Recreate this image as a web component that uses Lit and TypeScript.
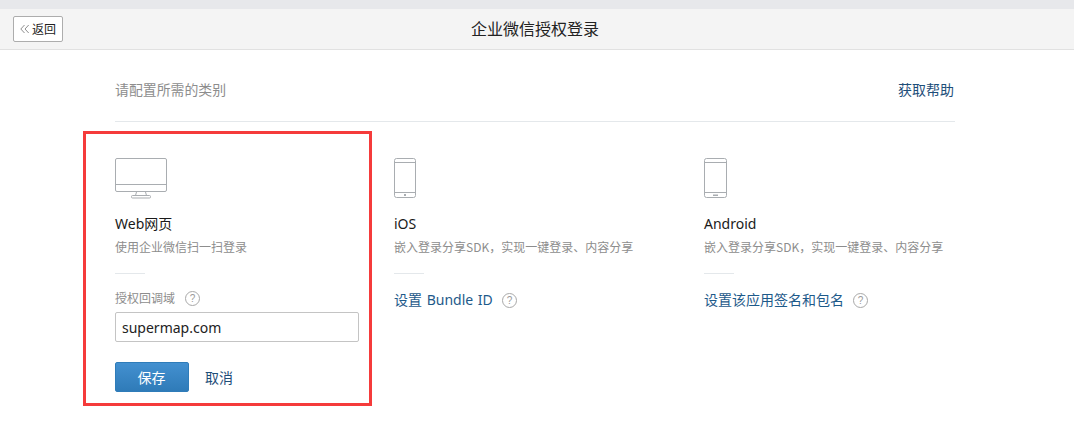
import { LitElement, html, css, svg } from "lit";
import { customElement } from "lit/decorators.js";

const help = html`<svg class="help" width="15" height="15" viewBox="0 0 15 15"><circle cx="7.5" cy="7.5" r="7" fill="none" stroke="#a8a8a8" stroke-width="1"/><text x="7.5" y="11" text-anchor="middle" font-size="10" fill="#9a9a9a" font-family="Liberation Sans, sans-serif">?</text></svg>`;

const monitor = html`<svg class="icon" width="53" height="41" viewBox="0 0 53 41" fill="none" stroke="#a9adb1" stroke-width="1">
  <rect x="0.5" y="0.5" width="51" height="33" rx="1.5"/>
  <path d="M0.5 26.5H51.5"/>
  <path d="M21.5 34L20.5 37.5M30.5 34L31.5 37.5"/>
  <rect x="16.5" y="37.5" width="19" height="2.5" rx="1"/>
</svg>`;

const phone = (android: boolean) => html`<svg class="icon" width="${android ? 23 : 22}" height="41" viewBox="0 0 ${android ? 23 : 22} 41" fill="none" stroke="#a9adb1" stroke-width="1">
  <rect x="0.5" y="0.5" width="${android ? 22 : 21}" height="39" rx="2"/>
  <path d="M0.5 4.5H${android ? 22.5 : 21.5}M0.5 34.5H${android ? 22.5 : 21.5}"/>
  ${android
    ? svg`<rect x="9" y="36.5" width="5" height="1.5" fill="#a9adb1" stroke="none"/>`
    : svg`<rect x="10" y="36" width="2" height="2" fill="#a9adb1" stroke="none"/>`}
</svg>`;

@customElement("app-root")
export class AppRoot extends LitElement {
  static styles = css`
    :host {
      display: block;
      width: 1074px;
      height: 439px;
      overflow: hidden;
      background: #fff;
      font-family: "Noto Sans", "Noto Sans CJK SC", sans-serif;
      color: #222;
    }
    .strip { height: 9px; background: #e7e8eb; }
    .topbar {
      height: 40px;
      background: #f4f4f4;
      border-bottom: 1px solid #e1e1e1;
      display: flex;
      align-items: center;
      justify-content: center;
      padding-right: 4px;
      position: relative;
    }
    .topbar h1 {
      margin: 0 0 2px;
      font-size: 16px;
      font-weight: 400;
      color: #222;
      font-family: "Noto Sans CJK SC", sans-serif;
    }
    .back {
      position: absolute;
      left: 13px;
      top: 7px;
      box-sizing: border-box;
      width: 50px;
      height: 26px;
      background: #fff;
      border: 1px solid #adadad;
      border-radius: 2px;
      display: flex;
      align-items: center;
      padding: 0 0 1px 6px;
      gap: 2px;
      font-size: 12px;
      color: #222;
      font-family: "Noto Sans CJK SC", sans-serif;
    }
    .main { width: 840px; margin-left: 115px; }
    .head {
      height: 65px;
      border-bottom: 1px solid #e4e8eb;
      display: flex;
      justify-content: space-between;
      align-items: center;
      padding: 6px 1px 0 0;
      margin-bottom: 9px;
      font-family: "Noto Sans CJK SC", sans-serif;
    }
    .head .hint { font-size: 13.9px; color: #8d8d8d; }
    .head .link { font-size: 14px; color: #1e4e79; }
    .cols { display: flex; }
    .col { padding-top: 27px; }
    .web {
      box-sizing: border-box;
      width: 289px;
      height: 275px;
      margin-left: -32px;
      border: 3px solid #f53b3b;
      padding: 24px 10px 0 29px;
    }
    .ios { width: 310px; margin-left: 22px; }
    .android { flex: 1; }
    .icon { display: block; height: 41px; }
    .name {
      margin-top: 15px;
      font-size: 14px;
      line-height: 20px;
      color: #1a1a1a;
      font-family: "Noto Sans", "Noto Sans CJK SC", sans-serif;
    }
    .desc {
      margin-top: 3px;
      font-size: 12px;
      line-height: 20px;
      color: #8d8d8d;
      font-family: "Noto Sans CJK SC", sans-serif;
      white-space: nowrap;
    }
    .sep { width: 30px; height: 1px; background: #e4e8eb; margin: 16px 0 15px; }
    .set {
      display: flex;
      align-items: center;
      gap: 9px;
      font-size: 14px;
      line-height: 22px;
      color: #1e5a8a;
      font-family: "Noto Sans", "Noto Sans CJK SC", sans-serif;
    }
    .set span { word-spacing: 1px; }
    .label {
      display: flex;
      align-items: center;
      gap: 10px;
      font-size: 12px;
      line-height: 18px;
      color: #8d8d8d;
      font-family: "Noto Sans CJK SC", sans-serif;
    }
    .input {
      box-sizing: border-box;
      margin-top: 5px;
      width: 244px;
      height: 30px;
      border: 1px solid #c4c4c4;
      border-radius: 2px;
      padding: 0 6px;
      display: flex;
      align-items: center;
      font-size: 14px;
      color: #222;
      font-family: "Noto Sans", sans-serif;
    }
    .actions { display: flex; align-items: center; gap: 16px; margin-top: 20px; }
    .save {
      box-sizing: border-box;
      width: 74px;
      height: 30px;
      border-radius: 2px;
      background: linear-gradient(#4390d0, #2f7bb8);
      border: 1px solid #2f7cb9;
      color: #fff;
      display: flex;
      align-items: center;
      justify-content: center;
      padding-right: 1px;
      font-size: 14px;
      font-family: "Noto Sans CJK SC", sans-serif;
    }
    .cancel { font-size: 14px; color: #1e4e79; font-family: "Noto Sans CJK SC", sans-serif; }
    .help { flex: none; }
  `;

  render() {
    return html`
      <div class="strip"></div>
      <div class="topbar">
        <div class="back">
          <svg width="10" height="10" viewBox="0 0 10 10" fill="none" stroke="#8f8f8f" stroke-width="1"><path d="M4.5 1L0.8 5L4.5 9M8.7 1L5 5L8.7 9"/></svg>
          <span>返回</span>
        </div>
        <h1>企业微信授权登录</h1>
      </div>
      <div class="main">
        <div class="head">
          <span class="hint">请配置所需的类别</span>
          <span class="link">获取帮助</span>
        </div>
        <div class="cols">
          <section class="web">
            ${monitor}
            <div class="name">Web网页</div>
            <div class="desc">使用企业微信扫一扫登录</div>
            <div class="sep"></div>
            <div class="label"><span>授权回调域</span>${help}</div>
            <div class="input">supermap.com</div>
            <div class="actions">
              <div class="save">保存</div>
              <span class="cancel">取消</span>
            </div>
          </section>
          <section class="col ios">
            ${phone(false)}
            <div class="name">iOS</div>
            <div class="desc">嵌入登录分享SDK，实现一键登录、内容分享</div>
            <div class="sep"></div>
            <div class="set"><span>设置 Bundle ID</span>${help}</div>
          </section>
          <section class="col android">
            ${phone(true)}
            <div class="name">Android</div>
            <div class="desc">嵌入登录分享SDK，实现一键登录、内容分享</div>
            <div class="sep"></div>
            <div class="set"><span>设置该应用签名和包名</span>${help}</div>
          </section>
        </div>
      </div>
    `;
  }
}
